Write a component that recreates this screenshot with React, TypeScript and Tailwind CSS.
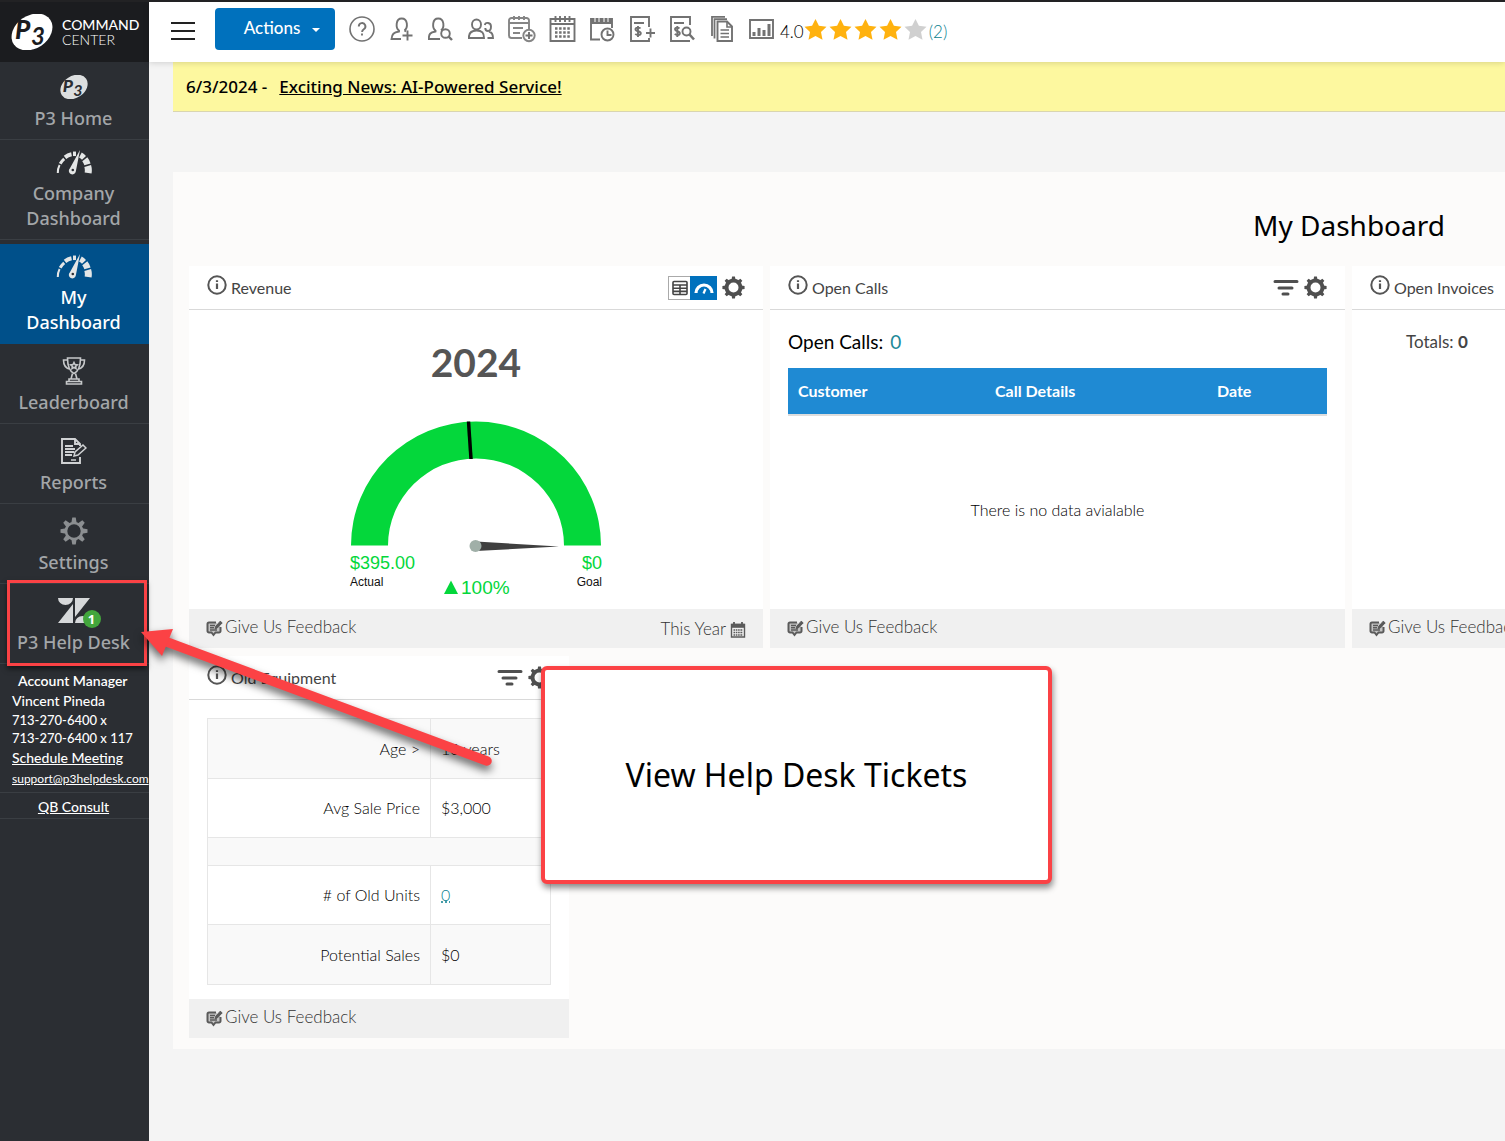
import React from "react";

type Kids = { children: React.ReactNode };

function Logo({ size, fill, ink }: { size: string; fill: string; ink: string }) {
  return (
    <svg viewBox="0 0 42 36" className={size} aria-hidden="true">
      <ellipse cx="21" cy="18" rx="22" ry="16.500" fill={fill} transform="rotate(-34 21 18)" />
      <text x="4" y="25" fontFamily="Lato" fontWeight="900" fontStyle="italic" fontSize="26" fill={ink}>P</text>
      <text x="20" y="31" fontFamily="Lato" fontWeight="700" fontStyle="italic" fontSize="24" fill={ink}>3</text>
    </svg>
  );
}

function Speedometer() {
  return (
    <svg viewBox="0 0 36 26" width="36" height="26" fill="none" aria-hidden="true">
      <path d="M1.800 24a16 16 0 0 1 1.800-8" stroke="#e4e6e6" strokeWidth="2" />
      <path d="M4.200 14.800a16 16 0 0 1 4-5" stroke="#e4e6e6" strokeWidth="3" />
      <path d="M9 8.300a16 16 0 0 1 6.500-3" stroke="#e4e6e6" strokeWidth="4" />
      <path d="M17 4.800h3" stroke="#e4e6e6" strokeWidth="4.500" />
      <path d="M24.400 6a15 15 0 0 1 3.600 2.800" stroke="#e4e6e6" strokeWidth="5.500" />
      <path d="M28.800 10.200a15 15 0 0 1 2.700 5.200" stroke="#e4e6e6" strokeWidth="6.500" />
      <path d="M31.700 17a15 15 0 0 1 .4 7" stroke="#e4e6e6" strokeWidth="7" />
      <path d="M24 1 13.800 19.500a3.500 3.500 0 1 0 6 3z" fill="#e4e6e6" />
      <circle cx="16.800" cy="21" r="1.300" fill="#2b2e33" />
    </svg>
  );
}

function Trophy() {
  return (
    <svg viewBox="0 0 24 28" width="24" height="28" fill="none" stroke="#c6c8ca" strokeWidth="1.600" aria-hidden="true">
      <path d="M5.500 1h13c0 8-1.500 13-6.500 15.500C7 14 5.500 9 5.500 1z" />
      <path d="M5.500 3H1.500c0 5 2 8 6 9M18.500 3h4c0 5-2 8-6 9" />
      <path d="M10.500 16.500 9 22h6l-1.500-5.500M7 22h10v2.500H7zM4.500 24.500h15V27h-15z" />
      <path d="m12 5.500 1 2 2.200.3-1.600 1.500.4 2.200-2-1-2 1 .4-2.200-1.600-1.500 2.200-.3z" />
    </svg>
  );
}

function Report() {
  return (
    <svg viewBox="0 0 26 28" width="26" height="28" fill="none" stroke="#d0d2d4" strokeWidth="1.900" aria-hidden="true">
      <path d="M19 20v6H1V2h13l5 5v2M14 2v5h5" />
      <path d="M4 9h8M4 12h10M4 15h9M4 18h7" strokeWidth="1.800" />
      <path d="m13 19 1-4 8-7 3 3-8 7zM10 23h5" strokeWidth="1.500" />
    </svg>
  );
}

function GearIcon({ size, color, hole, ring }: { size: number; color: string; hole: number; ring: number }) {
  const teeth = [0, 45, 90, 135, 180, 225, 270, 315];
  return (
    <svg viewBox="0 0 28 28" width={size} height={size} aria-hidden="true">
      <circle cx="14" cy="14" r={hole} fill="none" stroke={color} strokeWidth={ring} />
      {teeth.map((a) => (
        <path key={a} d="M12.300 0.500h3.400l1 5.500h-5.400z" fill={color} transform={`rotate(${a} 14 14)`} />
      ))}
    </svg>
  );
}

function ZendeskIcon() {
  return (
    <svg viewBox="0 0 34 28" width="34" height="28" fill="#d6d8da" aria-hidden="true">
      <path d="M1 1h15a7.500 7 0 0 1-15 0zM16 7v19H1zM18 1h15L18 20zM18 26a7.500 7 0 0 1 15 0z" />
    </svg>
  );
}

function NavItem({ icon, label, box, active }: { icon: React.ReactNode; label: React.ReactNode; box: string; active?: boolean }) {
  return (
    <a
      href="#"
      className={`flex flex-col items-center justify-end border-b pr-0.5 pb-2 text-center text-[18px] leading-[25px] font-medium ${box} ${
        active ? "mt-1 border-[#00508a] bg-[#00508a] text-white" : "border-[#3a3e43] text-[#a3a6a9]"
      }`}
    >
      <span className="relative flex h-[38px] items-center justify-center">{icon}</span>
      <span>{label}</span>
    </a>
  );
}

function Tool({ label, children }: Kids & { label: string }) {
  return (
    <button aria-label={label} className="h-7 w-7 shrink-0">
      <svg viewBox="0 0 28 28" width="28" height="28" fill="none" stroke="#727272" strokeWidth="1.900">
        {children}
      </svg>
    </button>
  );
}

function Star({ color }: { color: string }) {
  return (
    <svg viewBox="0 0 25 24" width="25" height="24" aria-hidden="true">
      <path fill={color} d="m11.500 1 3.400 6.700 7.600 1-5.500 5.300 1.500 7.800-7-3.700-7 3.700L6 14 .500 8.700l7.600-1z" />
    </svg>
  );
}

function InfoIcon() {
  return (
    <svg viewBox="0 0 20 20" width="20" height="20" fill="none" stroke="#555" aria-hidden="true">
      <circle cx="10" cy="10" r="8.700" strokeWidth="2" />
      <path d="M10 8.500V14M10 5.200v1.900" strokeWidth="2.200" />
    </svg>
  );
}

function FilterIcon() {
  return (
    <svg viewBox="0 0 26 18" width="26" height="18" stroke="#4f4f4f" strokeWidth="3" strokeLinecap="round" aria-hidden="true">
      <path d="M2 2.500h22M6 9h13M10 15h5" />
    </svg>
  );
}

function FeedbackIcon() {
  return (
    <svg viewBox="0 0 17 17" width="17" height="17" fill="none" stroke="#5a5a5a" strokeWidth="2" aria-hidden="true">
      <path d="M10 2.500H3A1.500 1.500 0 0 0 1.500 4v7A1.500 1.500 0 0 0 3 12.500h2.500L7.500 15l2-2.500H13a1.500 1.500 0 0 0 1.500-1.500V7" fill="#c4c4c4" />
      <path d="M4 5.500h5M4 7.700h4M4 10h7" strokeWidth="1.400" />
      <path d="m9 9 .6-2.400L14.200 1.200l2 1.700L11.300 8z" fill="#5a5a5a" strokeWidth="1" />
    </svg>
  );
}

function Card({ title, tools, footer, width, children }: Kids & { title: string; tools?: React.ReactNode; footer?: React.ReactNode; width: string }) {
  return (
    <section className={`flex shrink-0 flex-col bg-white ${width}`}>
      <header className="flex h-11 items-center border-b border-[#d9d9d9] pr-[18px] pl-[18px]">
        <span className="mb-1.5">
          <InfoIcon />
        </span>
        <h2 className="ml-1 text-[16px] leading-5 text-[#444]">{title}</h2>
        <div className="ml-auto flex items-center">{tools}</div>
      </header>
      <div className="h-[299px]">{children}</div>
      <footer className="flex h-[39px] items-center justify-between bg-[#f0f0f0] pr-[17px] pb-1 pl-[17px] text-[17px] leading-5 font-light text-[#333]">
        <a href="#" className="flex items-center gap-0.5 whitespace-nowrap">
          <span className="mt-1">
            <FeedbackIcon />
          </span>
          Give Us Feedback
        </a>
        {footer}
      </footer>
    </section>
  );
}

function FilterTools() {
  return (
    <>
      <button aria-label="Filter">
        <FilterIcon />
      </button>
      <button aria-label="Settings" className="ml-[5px]">
        <GearIcon size={23} color="#4f4f4f" hole={8.5} ring={4.8} />
      </button>
    </>
  );
}

function Gauge() {
  return (
    <svg viewBox="0 0 260 190" width="260" height="190" className="mx-auto block" fontFamily="Liberation Sans" role="img" aria-label="Revenue gauge">
      <path d="M5 133.500a125 124 0 0 1 250 0h-37a88 87 0 0 0-176 0z" fill="#04d73b" />
      <path d="M122.500 9.500 125 47" stroke="#000" strokeWidth="3.500" />
      <path d="M130 129.500 213 134.500l-83 4.500z" fill="#3f3f3f" />
      <circle cx="129.500" cy="134" r="6" fill="#a0afa8" />
      <text x="4" y="157" fontSize="18" fill="#04d73b">$395.00</text>
      <text x="256" y="157" fontSize="18" textAnchor="end" fill="#04d73b">$0</text>
      <text x="4" y="174" fontSize="12" fill="#111">Actual</text>
      <text x="256" y="174" fontSize="12" textAnchor="end" fill="#111">Goal</text>
      <path d="M98 182h14L105 168.500z" fill="#04d73b" />
      <text x="115" y="182" fontSize="19" fill="#04d73b">100%</text>
    </svg>
  );
}

const equipment = [
  { label: "Age >", value: "10 years", row: "h-[60px] bg-[#f9f9f9]" },
  { label: "Avg Sale Price", value: "$3,000", row: "h-[59px]" },
  { label: "", value: "", row: "h-7 bg-[#f9f9f9]" },
  { label: "# of Old Units", value: "0", row: "h-[59px]", link: true },
  { label: "Potential Sales", value: "$0", row: "h-[60px] bg-[#f9f9f9]" },
];

export default function App() {
  return (
    <div className="relative flex min-h-screen flex-col overflow-hidden border-t-2 border-[#222224] bg-[#f4f4f4] font-['Lato',sans-serif] text-[#444]">
      <div className="flex grow">
        <aside className="w-[149px] shrink-0 bg-[#2b2e33]">
          <div className="flex h-[60px] items-center bg-[#1b1c1f] pl-[11px]">
            <Logo size="h-9 w-[42px]" fill="#fff" ink="#1b1c1f" />
            <div className="ml-[9px] text-[14px] leading-[15px] text-white">
              <div className="font-medium">COMMAND</div>
              <div className="font-light">CENTER</div>
            </div>
          </div>
          <nav className="font-['Noto_Sans',sans-serif]">
            <NavItem box="h-[78px]" label="P3 Home" icon={<Logo size="h-6 w-7" fill="#dcdedf" ink="#2b2e33" />} />
            <NavItem box="h-[100px]" label={<>Company<br />Dashboard</>} icon={<Speedometer />} />
            <NavItem box="h-[100px]" active label={<>My<br />Dashboard</>} icon={<Speedometer />} />
            <NavItem box="h-20" label="Leaderboard" icon={<Trophy />} />
            <NavItem box="h-20" label="Reports" icon={<Report />} />
            <NavItem box="h-20" label="Settings" icon={<GearIcon size={28} color="#8b8e91" hole={8} ring={2.6} />} />
            <NavItem
              box="h-20"
              label="P3 Help Desk"
              icon={
                <>
                  <ZendeskIcon />
                  <span className="absolute -right-[10px] bottom-0.5 flex h-[18px] w-[18px] items-center justify-center rounded-full bg-[#43a63c] text-[13px] leading-4 font-bold text-white">1</span>
                </>
              }
            />
          </nav>
          <div className="flex flex-col border-b border-[#3a3e43] pt-[7px] pb-1 pl-3 text-[14px] leading-[19px] whitespace-nowrap text-white">
            <strong className="pb-px pl-1.5 font-semibold">Account Manager</strong>
            <span className="font-medium">Vincent Pineda</span>
            <span className="flex flex-col py-px text-[13px] leading-[18px] font-medium">
              <span>713-270-6400 x</span>
              <span>713-270-6400 x 117</span>
            </span>
            <a href="#" className="font-medium underline">Schedule Meeting</a>
            <a href="#" className="pt-0.5 text-[12px] underline">support@p3helpdesk.com</a>
          </div>
          <div className="border-b border-[#3a3e43] pt-1 pr-0.5 pb-0.5 text-center text-[14px] leading-[19px] font-medium text-white">
            <a href="#" className="underline">QB Consult</a>
          </div>
        </aside>

        <div className="flex min-w-0 grow flex-col">
          <header className="relative flex h-[60px] items-center bg-white pb-1.5 pl-[22px] shadow-[0_1px_6px_rgba(0,0,0,0.15)]">
            <button aria-label="Toggle menu" className="mt-1 flex w-6 flex-col gap-1.5">
              <span className="h-0.5 bg-[#222]" />
              <span className="h-0.5 bg-[#222]" />
              <span className="h-0.5 bg-[#222]" />
            </button>
            <button className="ml-5 flex h-[42px] w-[120px] items-center justify-center gap-3 rounded bg-[#0071bd] pb-0.5 pl-[14px] text-[17px] font-medium text-white">
              Actions
              <span className="mt-1 border-x-4 border-t-4 border-x-transparent border-t-white" />
            </button>
            <div className="ml-[13px] flex gap-3">
              <Tool label="Help">
                <circle cx="14" cy="14" r="12" strokeWidth="1.600" />
                <path d="M10.800 11.500a3.300 3.300 0 1 1 5 2.700c-1.200.8-1.700 1.300-1.700 2.800M14 18.500v2" />
              </Tool>
              <Tool label="Add customer">
                <path d="M11 15.500C7.500 13 7.500 3.500 13.700 3.500s6.500 9 2.800 12" />
                <path d="M11 15v1.500C5.500 17.500 4 19 3.500 24H13M16.500 15.500l1.500 1M19.500 15.500v10M14.500 20.500h10" />
              </Tool>
              <Tool label="Find customer">
                <path d="M7.500 15.500C4 13 4 3.500 10.200 3.500s6.500 9 2.800 12" />
                <path d="M7.500 15v1.500C2 17.500.800 19 .800 24H12" />
                <circle cx="17.500" cy="18.500" r="4.300" />
                <path d="m20.500 21.500 3.500 3.500" strokeWidth="2.400" />
              </Tool>
              <Tool label="Customers">
                <ellipse cx="8.500" cy="9.500" rx="4.500" ry="5" />
                <path d="M.800 23c0-5 2-7.500 7.700-7.500S16 18 16 23zM16.800 10c.500-3 6.200-3 6.200 1.500 0 3-1.500 4.500-3 4.500-1.700 0-2.700-1.500-2.700-3M19.500 23h5.500c0-3-.5-5.500-4-6.500" />
              </Tool>
              <Tool label="Schedule call">
                <path d="M14 23H3.500A2.500 2.500 0 0 1 1 20.500v-15A2.500 2.500 0 0 1 3.500 3h15A2.500 2.500 0 0 1 21 5.500V14M1 8h20M6 1v4M11 1v4M16 1v4M5 13h10M5 18h7" stroke="#858585" />
                <circle cx="21" cy="20.500" r="5.700" stroke="#858585" />
                <path d="M21 17v7M17.500 20.500h7" />
              </Tool>
              <Tool label="Calendar">
                <path d="M2.500 4h24v22h-24zM2.500 9h24" />
                <path d="M7.500 1v6M12 1v6M17 1v6M21.500 1v6" />
                <path d="M7 13.500h15M7 17.500h15M7 21.500h15" strokeDasharray="2.500 1.600" strokeWidth="2.500" />
              </Tool>
              <Tool label="Time clock">
                <path d="M12 24.500H3V4h21v9" />
                <path d="M3 6.500h21" strokeWidth="5" />
                <path d="M7 1v6M11 1v6M16 1v6M20 1v6" stroke="#fff" strokeWidth="1" />
                <circle cx="19.500" cy="19.500" r="6" fill="#fff" />
                <path d="M19.500 15.500v4.500h4" />
              </Tool>
              <Tool label="Add invoice">
                <path d="M21 12V2H3v24h18v-3M6 8h10" />
                <path d="M12.500 13.500c-1-1.300-5-1.300-5 .8 0 2.700 5.300 1.200 5.300 4 0 2.200-4 2.200-5.500.6M10 11v11M22.500 13.500v9M18 18h9" />
              </Tool>
              <Tool label="Find invoice">
                <path d="M22 10V2H3v24h19M6 8h10" />
                <path d="M11.500 13.500c-1-1.300-4.500-1.300-4.500.8 0 2.700 4.800 1.200 4.800 4 0 2.200-3.500 2.200-5 .6M9.300 11v11" />
                <circle cx="18.500" cy="16.500" r="4" />
                <path d="m21.500 19.500 4.500 5" strokeWidth="2.600" />
              </Tool>
              <Tool label="Documents">
                <path d="M9.500 6.500h9.500l5 5V26H9.500z" />
                <path d="M6.500 23.500V4.200H19M4 21V1.800h13" strokeWidth="1.800" />
                <path d="M19 6.500V12h5M12.500 15h8.500M12.500 18.500h8.500M12.500 22h8.500" strokeWidth="1.600" />
              </Tool>
              <Tool label="Statistics">
                <path d="M2 5h23v18H2z" />
                <path d="M6 21v-4M11 21v-8M16 21v-6M21 21V9" strokeWidth="3" />
              </Tool>
            </div>
            <div className="mt-1.5 ml-1 flex items-center">
              <span className="text-[17px] leading-6 font-light text-black">4.0</span>
              <span className="flex pb-1">
                <Star color="#ffb20f" />
                <Star color="#ffb20f" />
                <Star color="#ffb20f" />
                <Star color="#ffb20f" />
                <Star color="#d0d0d0" />
              </span>
              <a href="#" className="text-[17px] leading-6 font-light text-[#0b7f8f]">(2)</a>
            </div>
          </header>

          <main className="grow pl-6">
            <div className="flex h-[50px] items-center gap-3 border-b border-[#d9d5b0] bg-[#fdf89f] pl-[13px] font-['Noto_Sans',sans-serif] text-[17px] font-medium text-black">
              <span>6/3/2024 -</span>
              <a href="#" className="underline">Exciting News: AI-Powered Service!</a>
            </div>

            <div className="mt-[60px] bg-[#fcfbfa] pb-[11px] pl-4">
              <h1 className="flex h-[94px] items-center justify-end pt-3 pr-[60px] font-['Noto_Sans',sans-serif] text-[28px] text-black">My Dashboard</h1>
              <div className="flex gap-[7px] overflow-hidden">
                <Card
                  title="Revenue"
                  width="w-[574px]"
                  tools={
                    <>
                      <button aria-label="Table view" className="flex h-6 w-[22px] items-center justify-center border border-r-0 border-[#aaa]">
                        <svg viewBox="0 0 16 16" width="16" height="16" fill="none" stroke="#444" strokeWidth="1.600">
                          <rect x="1" y="1.500" width="14" height="13" rx="1" />
                          <path d="M1 5h14M1 8.200h14M1 11.400h14M8 5v9.500" />
                        </svg>
                      </button>
                      <button aria-label="Gauge view" className="flex h-6 w-[27px] items-center justify-center bg-[#0071bd]">
                        <svg viewBox="0 0 20 14" width="20" height="14" fill="none" stroke="#fff">
                          <path d="M2 12a8 8 0 0 1 16 0" strokeWidth="3.200" />
                          <path d="m9.500 12.500 2-4.500" strokeWidth="2.200" />
                        </svg>
                      </button>
                      <button aria-label="Settings" className="ml-[5px]">
                        <GearIcon size={23} color="#4f4f4f" hole={8.5} ring={4.8} />
                      </button>
                    </>
                  }
                  footer={
                    <button className="flex items-center gap-1 pt-1">
                      This Year
                      <svg viewBox="0 0 16 16" width="16" height="16" fill="none" stroke="#5a5a5a" strokeWidth="1.400" className="mt-0.5" aria-hidden="true">
                        <path d="M1.500 2.500h13v12.500h-13z" />
                        <path d="M1.500 3.800h13" strokeWidth="4" />
                        <path d="M4 0v3M12 0v3" strokeWidth="1.800" />
                        <path d="M3.500 8h9.500M3.500 10.500h9.500M3.500 13h9.500" strokeDasharray="1.600 .7" />
                      </svg>
                    </button>
                  }
                >
                  <div className="pt-[27px] text-center text-[39px] leading-[50px] font-bold text-[#555]">2024</div>
                  <div className="mt-[25px]">
                    <Gauge />
                  </div>
                </Card>

                <Card title="Open Calls" width="w-[575px]" tools={<FilterTools />}>
                  <div className="flex h-full flex-col px-[18px] pt-5">
                    <p className="text-[19px] leading-6 text-black">
                      Open Calls: <a href="#" className="ml-0.5 text-[#1e8a99]">0</a>
                    </p>
                    <table className="mt-[14px] w-full border-b-2 border-[#ddd] text-left text-[16px] text-white">
                      <thead>
                        <tr className="h-[47px] bg-[#1f8ad3]">
                          <th className="w-[197px] px-2.5">Customer</th>
                          <th className="w-[222px] px-2.5">Call Details</th>
                          <th className="px-2.5">Date</th>
                        </tr>
                      </thead>
                    </table>
                    <p className="mt-[82px] text-center text-[16px] leading-6 font-light text-black">There is no data avialable</p>
                  </div>
                </Card>

                <Card title="Open Invoices" width="w-[575px]" tools={<FilterTools />}>
                  <p className="pt-5 pl-[54px] text-[17px] leading-6">
                    Totals: <b>0</b>
                  </p>
                </Card>
              </div>

              <div className="mt-2 flex">
                <Card title="Old Equipment" width="w-[380px]" tools={<FilterTools />}>
                  <div className="px-[18px] pt-[18px]">
                    <table className="w-full border-collapse border border-[#e6e6e6] text-[16px] font-light text-black">
                      <tbody>
                        {equipment.map((e) =>
                          e.label ? (
                            <tr key={e.label} className={`border-b border-[#e6e6e6] ${e.row}`}>
                              <th scope="row" className="w-[223px] border-r border-[#e6e6e6] pr-2.5 text-right font-light">{e.label}</th>
                              <td className="pl-2.5">
                                {e.link ? (
                                  <a href="#" className="text-[#0b7f8f] underline decoration-dotted">{e.value}</a>
                                ) : (
                                  e.value
                                )}
                              </td>
                            </tr>
                          ) : (
                            <tr key="gap" className={`border-b border-[#e6e6e6] ${e.row}`}>
                              <td colSpan={2} />
                            </tr>
                          ),
                        )}
                      </tbody>
                    </table>
                  </div>
                </Card>
              </div>
            </div>
          </main>
        </div>
      </div>

      <div className="pointer-events-none absolute top-[578px] left-[7px] h-[86px] w-[140px] border-3 border-[#fb4245] shadow-[0_3px_5px_rgba(0,0,0,0.5)]" />
      <svg viewBox="0 0 360 150" width="360" height="150" className="pointer-events-none absolute top-[623px] left-[137px] drop-shadow-[0_5px_4px_rgba(0,0,0,0.6)]" aria-hidden="true">
        <path d="M30 17 350 136" stroke="#fb4245" strokeWidth="9.500" strokeLinecap="round" />
        <path d="M4 7 36 4 25 31z" fill="#fb4245" />
      </svg>
      <div className="absolute top-[664px] left-[541px] flex h-[218px] w-[511px] items-center justify-center rounded-md border-4 border-[#fb4245] bg-white font-['Noto_Sans',sans-serif] text-[32px] text-black shadow-[1px_4px_6px_rgba(0,0,0,0.45)]">
        View Help Desk Tickets
      </div>
    </div>
  );
}
